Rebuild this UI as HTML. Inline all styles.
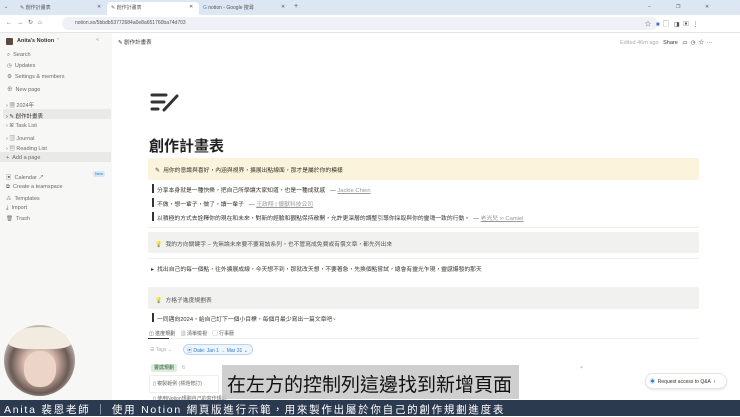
<!DOCTYPE html>
<html><head><meta charset="utf-8"><style>
*{margin:0;padding:0;box-sizing:border-box}
body{width:740px;height:416px;overflow:hidden;background:#fff;font-family:"Liberation Sans","Noto Sans CJK TC",sans-serif;position:relative;color:#37352f}
.a{position:absolute;white-space:nowrap}
.sb{font-size:5.5px;color:#6b6b66}
.t{font-size:5px;color:#555}
</style></head><body>
<div class="a" style="left:0;top:0;width:740px;height:15px;background:#dde6f3"></div>
<div class="a" style="left:107px;top:2px;width:92px;height:14px;background:#fff;border-radius:4px 4px 0 0"></div>
<div class="a t" style="left:4px;top:4px">⌄</div>
<div class="a t" style="left:20px;top:4px">✎ 創作計畫表</div><div class="a t" style="left:97px;top:4px">✕</div>
<div class="a t" style="left:111px;top:4px">✎ 創作計畫表</div><div class="a t" style="left:189px;top:4px">✕</div>
<div class="a t" style="left:203px;top:4px"><span style="color:#4285f4">G</span> notion - Google 搜尋</div><div class="a t" style="left:281px;top:4px">✕</div>
<div class="a t" style="left:294px;top:3px;font-size:7px">+</div>
<div class="a t" style="left:648px;top:4px">–</div><div class="a t" style="left:676px;top:4px">❐</div><div class="a t" style="left:705px;top:4px">✕</div>
<div class="a" style="left:0;top:15px;width:740px;height:18px;background:#fff;border-bottom:1px solid #e5e5e5"></div>
<div class="a t" style="left:6px;top:19px;font-size:6px">←&nbsp;&nbsp;&nbsp;→&nbsp;&nbsp;&nbsp;↻&nbsp;&nbsp;&nbsp;⌂</div>
<div class="a" style="left:62px;top:17px;width:596px;height:13px;background:#eef1f6;border-radius:7px"></div>
<div class="a t" style="left:75px;top:20px">notion.so/5bbdb53772684a0e8a651760ba74d703</div>
<div class="a t" style="left:645px;top:19px;font-size:6px">☆&nbsp;&nbsp;&nbsp;<span style="color:#3b6fd8">■</span>&nbsp;&nbsp;▢&nbsp;&nbsp;&nbsp;◨&nbsp;&nbsp;▣&nbsp;&nbsp;⋮</div>
<div class="a" style="left:0;top:33px;width:112px;height:367px;background:#f7f7f5"></div>
<div class="a" style="left:6px;top:38px;width:7px;height:7px;background:#5a4a40;border-radius:1px"></div>
<div class="a sb" style="left:17px;top:38px;color:#37352f;font-weight:bold">Anita's Notion <span style="font-weight:normal;color:#aaa">⌃</span></div>
<div class="a sb" style="left:96px;top:37px;color:#999">«</div>
<div class="a sb" style="left:7px;top:52px">⌕&nbsp;&nbsp;Search</div>
<div class="a sb" style="left:7px;top:63px">◷&nbsp;&nbsp;Updates</div>
<div class="a sb" style="left:7px;top:74px">⚙&nbsp;&nbsp;Settings &amp; members</div>
<div class="a sb" style="left:7px;top:85px">⊕&nbsp;&nbsp;New page</div>
<div class="a" style="left:3px;top:109px;width:108px;height:10px;background:#e9e9e7;border-radius:2px"></div>
<div class="a sb" style="left:6px;top:101px">›&nbsp;▦&nbsp;2024年</div>
<div class="a sb" style="left:6px;top:112px;color:#37352f">›&nbsp;✎&nbsp;創作計畫表</div>
<div class="a sb" style="left:6px;top:123px">›&nbsp;ꕤ&nbsp;Task List</div>
<div class="a sb" style="left:6px;top:134px">›&nbsp;▥&nbsp;Journal</div>
<div class="a sb" style="left:6px;top:144px">›&nbsp;▤&nbsp;Reading List</div>
<div class="a" style="left:0;top:152px;width:111px;height:10px;background:#e9e9e7"></div>
<div class="a sb" style="left:6px;top:155px">+&nbsp;&nbsp;Add a page</div>
<div class="a sb" style="left:6px;top:173px">▣&nbsp;&nbsp;Calendar ↗</div>
<div class="a" style="left:93px;top:171px;width:12px;height:6px;background:#d8e8f5;border-radius:2px;font-size:4px;color:#2f7bc2;text-align:center;line-height:6px">New</div>
<div class="a sb" style="left:6px;top:184px">⧉&nbsp;&nbsp;Create a teamspace</div>
<div class="a sb" style="left:6px;top:194px">⁂&nbsp;&nbsp;Templates</div>
<div class="a sb" style="left:6px;top:205px">⤓&nbsp;&nbsp;Import</div>
<div class="a sb" style="left:6px;top:216px">🗑&nbsp;&nbsp;Trash</div>
<div class="a sb" style="left:118px;top:38px;color:#37352f">✎ 創作計畫表</div>
<div class="a sb" style="left:620px;top:38px;color:#aaa">Edited 46m ago&nbsp;&nbsp;&nbsp;<span style="color:#37352f">Share&nbsp;&nbsp;&nbsp;▭&nbsp;&nbsp;◷&nbsp;&nbsp;☆&nbsp;&nbsp;···</span></div>
<svg class="a" style="left:150px;top:92px" width="32" height="22" viewBox="0 0 32 22"><g stroke="#333" stroke-width="3" stroke-linecap="round"><line x1="2" y1="3" x2="16" y2="3"/><line x1="2" y1="10" x2="14" y2="10"/><line x1="2" y1="17" x2="8" y2="17"/><line x1="14" y1="18" x2="27" y2="4"/></g></svg>
<div class="a" style="left:149px;top:135px;font-size:15px;font-weight:bold;color:#222">創作計畫表</div>
<div class="a" style="left:148px;top:158px;width:551px;height:22px;background:#fbf3db;border-radius:2px"></div>
<div class="a sb" style="left:155px;top:165px;color:#37352f;font-size:5.8px">✎&nbsp;&nbsp;用你的意識與喜好，內涵與視界，擴展出點線面，那才是屬於你的模樣</div>
<div class="a" style="left:152px;top:184px;width:1.5px;height:9px;background:#333"></div>
<div class="a sb" style="left:157px;top:185px;color:#37352f;font-size:5.8px">分享本身就是一種快樂，把自己所學讓大家知道，也是一種成就感&nbsp;&nbsp;&nbsp;— <u style="color:#999">Jackie Chien</u></div>
<div class="a" style="left:152px;top:198px;width:1.5px;height:9px;background:#333"></div>
<div class="a sb" style="left:157px;top:199px;color:#37352f;font-size:5.8px">不做，想一輩子，做了，讀一輩子&nbsp;&nbsp;&nbsp;— <u style="color:#999">王政翔 | 優獸科技公司</u></div>
<div class="a" style="left:152px;top:212px;width:1.5px;height:9px;background:#333"></div>
<div class="a sb" style="left:157px;top:213px;color:#37352f;font-size:5.8px">以積極的方式去詮釋你的現在和未來，對新的經驗和觀點保持敞開，允許更深層的調整引導你採取與你的靈魂一致的行動。&nbsp;&nbsp;— <u style="color:#999">老光兒 ∞ Camiel</u></div>
<div class="a" style="left:148px;top:227px;width:551px;height:1px;background:#eee"></div>
<div class="a" style="left:148px;top:232px;width:551px;height:21px;background:#f1f1ef;border-radius:2px"></div>
<div class="a sb" style="left:155px;top:239px;color:#555;font-size:5.8px"><span style="color:#e0b040">💡</span>&nbsp;&nbsp;我的方向關鍵字 – 先無論未來要不要寫該系列，也不管寫成免費或有償文章，都先列出來</div>
<div class="a" style="left:148px;top:258px;width:551px;height:1px;background:#eee"></div>
<div class="a sb" style="left:151px;top:264px;color:#37352f;font-size:5.8px">▸&nbsp;&nbsp;找出自己的每一個點，往外擴展成線，今天想不到，那就改天想，不要著急，先換個點嘗試，總會有靈光乍現，靈感爆發的那天</div>
<div class="a" style="left:148px;top:287px;width:551px;height:22px;background:#f1f1ef;border-radius:2px"></div>
<div class="a sb" style="left:155px;top:295px;color:#555;font-size:5.8px"><span style="color:#e0b040">💡</span>&nbsp;&nbsp;方格子進度規劃表</div>
<div class="a" style="left:152px;top:313px;width:1.5px;height:9px;background:#333"></div>
<div class="a sb" style="left:157px;top:314px;color:#37352f;font-size:5.8px">一同邁向2024，給自己訂下一個小目標，每個月最少寫出一篇文章吧~</div>
<div class="a sb" style="left:149px;top:330px;color:#555;font-size:5px">◫ 進度規劃&nbsp;&nbsp;&nbsp;&nbsp;▥ 清單檢視&nbsp;&nbsp;&nbsp;&nbsp;▢ 行事曆</div>
<div class="a" style="left:148px;top:338px;width:551px;height:1px;background:#eee"></div>
<div class="a" style="left:148px;top:338px;width:21px;height:1px;background:#333"></div>
<div class="a sb" style="left:150px;top:347px;color:#aaa;font-size:5px">☰ Tags ⌄</div>
<div class="a" style="left:183px;top:344px;width:70px;height:11px;border:1px solid #b9d6f0;background:#eef5fc;border-radius:6px"></div>
<div class="a sb" style="left:187px;top:347px;color:#2f7bc2;font-size:5px">▣ Date: Jan 1 → Mar 31 ⌄</div>
<div class="a" style="left:151px;top:364px;width:26px;height:8px;background:#dbeddb;border-radius:2px;font-size:5px;color:#2b593f;text-align:center;line-height:8px">靈感規劃</div>
<div class="a sb" style="left:182px;top:365px;color:#aaa">6</div>
<div class="a sb" style="left:580px;top:365px;color:#aaa">+</div>
<div class="a" style="left:149px;top:375px;width:70px;height:18px;border:1px solid #eee;border-radius:2px"></div>
<div class="a sb" style="left:153px;top:380px;font-size:5px">▯ 複製範例 (標題修訂)</div>
<div class="a sb" style="left:153px;top:395px;font-size:5px">▯ 使用Notion規劃自己的寫作規劃</div>
<div class="a" style="left:645px;top:373px;width:82px;height:16px;border:1px solid #e5e5e5;border-radius:8px;background:#fff;box-shadow:0 1px 2px rgba(0,0,0,.1)"></div>
<div class="a sb" style="left:650px;top:378px;font-size:5px;color:#37352f"><span style="color:#2f7bc2">◉</span>&nbsp;&nbsp;Request access to Q&amp;A&nbsp;&nbsp;›</div>
<div class="a" style="left:4px;top:325px;width:71px;height:71px;border-radius:50%;background:radial-gradient(circle at 50% 55%,#e9d3c9 0,#d7b9ad 30%,#6b5a55 55%,#cfc7c3 75%);overflow:hidden">
<div style="position:absolute;left:4px;top:2px;width:64px;height:22px;background:#f1ebe0;border-radius:50% 50% 30% 30%"></div>
<div style="position:absolute;left:20px;top:26px;width:32px;height:36px;background:#ecd4c8;border-radius:45%"></div>
</div>
<div class="a" style="left:222px;top:365px;width:297px;height:34px;background:rgba(200,200,200,.88)"></div>
<div class="a" style="left:227px;top:370px;font-size:19px;color:#111">在左方的控制列這邊找到新增頁面</div>
<div class="a" style="left:0;top:400px;width:740px;height:16px;background:#2c3a4f"></div>
<div class="a" style="left:4px;top:402px;font-size:10.5px;color:#fff;letter-spacing:1.75px">Anita 裴恩老師 ｜ 使用 Notion 網頁版進行示範，用來製作出屬於你自己的創作規劃進度表</div>
</body></html>
